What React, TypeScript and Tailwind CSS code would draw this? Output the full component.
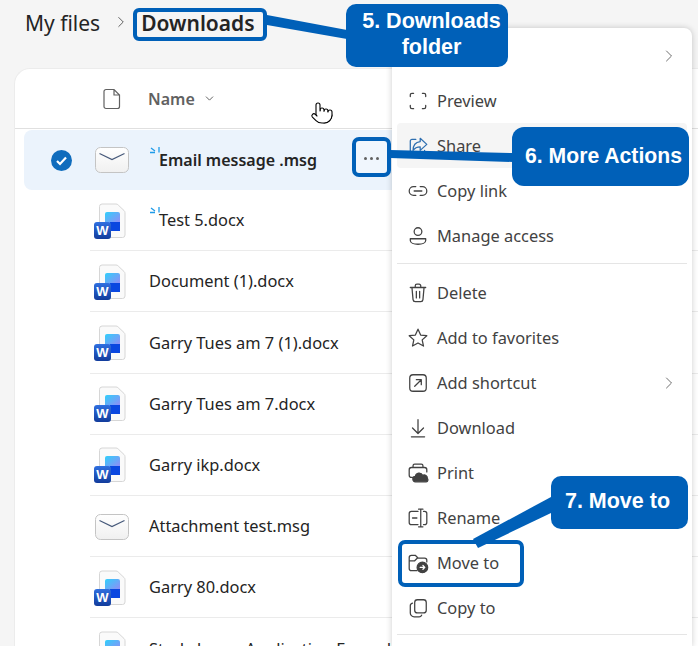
import React from 'react';
import { ChevronRight, ChevronDown, Pointer } from 'lucide-react';

const UI_FONT = "font-['Noto_Sans','Open_Sans',sans-serif]";

function Glyph({ children, color = '#424242' }: { children: React.ReactNode; color?: string }) {
  return (
    <svg width="22" height="22" viewBox="0 0 20 20" fill="none" stroke={color} strokeWidth="1.150" strokeLinecap="round" strokeLinejoin="round" className="ml-[-1px] shrink-0">
      {children}
    </svg>
  );
}

function WordIcon() {
  return (
    <svg width="34" height="36" viewBox="0 0 34 36" className="ml-[-1px] shrink-0">
      <defs>
        <linearGradient id="wd" x1="0" y1="0" x2="1" y2="1">
          <stop offset="0" stopColor="#2fd0fb" />
          <stop offset="1" stopColor="#9a86f5" />
        </linearGradient>
        <linearGradient id="wb" x1="0" y1="0" x2="0" y2="1">
          <stop offset="0" stopColor="#2f6fe0" />
          <stop offset="1" stopColor="#123c9c" />
        </linearGradient>
      </defs>
      <path d="M8 1h14c1 0 1.500.3 2.200 1l5.800 5.500c.7.7 1 1.300 1 2.200V32a2.500 2.500 0 0 1-2.500 2.500H8A2.500 2.500 0 0 1 5.500 32V3.500A2.500 2.500 0 0 1 8 1z" fill="#fafafa" stroke="#d6d6d6" />
      <rect x="11" y="9" width="15" height="12" rx="2" fill="url(#wd)" />
      <rect x="16" y="19" width="10" height="9" fill="#0a47e0" />
      <rect x="0" y="19" width="17" height="17" rx="3" fill="url(#wb)" />
      <text x="8.500" y="32" textAnchor="middle" fontSize="13" fontWeight="700" fill="#fff" fontFamily="Liberation Sans, sans-serif">W</text>
    </svg>
  );
}

function MailIcon() {
  return (
    <svg width="34" height="26" viewBox="0 0 34 26" className="shrink-0">
      <defs>
        <linearGradient id="ml" x1="0" y1="0" x2="0" y2="1">
          <stop offset="0" stopColor="#ffffff" />
          <stop offset="1" stopColor="#f0f0f0" />
        </linearGradient>
      </defs>
      <rect x="0.500" y="0.500" width="33" height="25" rx="5" fill="url(#ml)" stroke="#c4c4c4" />
      <path d="M4.500 6.500 17 12.500 29.500 6.500" fill="none" stroke="#46597a" strokeWidth="1.200" />
    </svg>
  );
}

function Sparkle() {
  return (
    <svg width="10" height="11" viewBox="0 0 10 11" className="absolute left-[-9px] top-[-1px]">
      <path d="M9 0v5.500M0 5.500h5M1 1l4 3" fill="none" stroke="#1f9be8" strokeWidth="1.300" />
    </svg>
  );
}

const files = [
  { name: 'Test 5.docx', kind: 'word', fresh: true },
  { name: 'Document (1).docx', kind: 'word' },
  { name: 'Garry Tues am 7 (1).docx', kind: 'word' },
  { name: 'Garry Tues am 7.docx', kind: 'word' },
  { name: 'Garry ikp.docx', kind: 'word' },
  { name: 'Attachment test.msg', kind: 'mail' },
  { name: 'Garry 80.docx', kind: 'word' },
  { name: 'Study Leave Application Form.docx', kind: 'word' },
];

const topItems = [
  { label: '', more: true, icon: null },
  { label: 'Preview', icon: <Glyph><path d="M3 6V4.500A1.500 1.500 0 0 1 4.500 3H6M14 3h1.500A1.500 1.500 0 0 1 17 4.500V6M17 14v1.500a1.500 1.500 0 0 1-1.500 1.500H14M6 17H4.500A1.500 1.500 0 0 1 3 15.500V14" /></Glyph> },
  { label: 'Share', active: true, icon: <Glyph color="#2f6fb0"><path d="M8 4H4.500A1.500 1.500 0 0 0 3 5.500v10A1.500 1.500 0 0 0 4.500 17h10a1.500 1.500 0 0 0 1.500-1.500V14" /><path d="M12 3l6 5.500-6 5.500v-3.300c-3 0-5 1-6.500 3.300 0-4.500 2.500-7.500 6.500-8z" /></Glyph> },
  { label: 'Copy link', icon: <Glyph><path d="M8 6H6a4 4 0 0 0 0 8h2M12 6h2a4 4 0 0 1 0 8h-2M6.500 10h7" /></Glyph> },
  { label: 'Manage access', icon: <Glyph><circle cx="10" cy="6" r="3.500" /><path d="M3 12.500h14V14c0 2-3 3.500-7 3.500S3 16 3 14z" /></Glyph> },
];

const bottomItems = [
  { label: 'Delete', icon: <Glyph><path d="M3 5h14M7.500 5V3.500A1.500 1.500 0 0 1 9 2h2a1.500 1.500 0 0 1 1.500 1.500V5M4.500 5l1 11a2 2 0 0 0 2 1.800h5a2 2 0 0 0 2-1.800l1-11M8.500 8.500v6M11.500 8.500v6" /></Glyph> },
  { label: 'Add to favorites', icon: <Glyph><path d="M10 2l2.400 5.300 5.600.6-4.200 3.800 1.200 5.600L10 14.500l-5 2.800 1.200-5.600L2 7.900l5.600-.6z" /></Glyph> },
  { label: 'Add shortcut', more: true, icon: <Glyph><rect x="2.500" y="2.500" width="15" height="15" rx="3" /><path d="M7 13l6-6M8.500 7H13v4.500" /></Glyph> },
  { label: 'Download', icon: <Glyph><path d="M10 2.500v12M5 10l5 5 5-5M4 18h12" /></Glyph> },
  { label: 'Print', icon: <Glyph><path d="M5.500 5V3.500A1.500 1.500 0 0 1 7 2h6a1.500 1.500 0 0 1 1.500 1.500V5M5 14H4a2 2 0 0 1-2-2V7a2 2 0 0 1 2-2h12a2 2 0 0 1 2 2v2" /><path d="M8 18a2.500 2.500 0 0 1-.400-5 3.500 3.500 0 0 1 6.600-1 3 3 0 0 1 4.300 3c.800.500.800 3-1 3z" fill="#424242" /></Glyph> },
  { label: 'Rename', icon: <Glyph><path d="M10 4H4a2 2 0 0 0-2 2v8a2 2 0 0 0 2 2h6M15 4h1a2 2 0 0 1 2 2v8a2 2 0 0 1-2 2h-1M12.500 2v16M10.500 2h4M10.500 18h4M5 10h4" /></Glyph> },
  { label: 'Move to', icon: <Glyph><path d="M9 17H4a2 2 0 0 1-2-2V5a2 2 0 0 1 2-2h3.500L10 5.500h6a2 2 0 0 1 2 2V9M2 8h5l2.500-2.500" /><circle cx="14" cy="14" r="4.800" fill="#424242" /><path d="M12 14h4M14.500 12.300 16.200 14l-1.700 1.700" stroke="#fff" /></Glyph> },
  { label: 'Copy to', icon: <Glyph><rect x="7" y="2.500" width="10.500" height="12" rx="2.500" /><path d="M5 5.500A2.500 2.500 0 0 0 3 8v6.500A3.500 3.500 0 0 0 6.500 18H11a2.500 2.500 0 0 0 2.300-1.500" /></Glyph> },
];

type Item = { label: string; icon: React.ReactNode; more?: boolean; active?: boolean };

function MenuItem({ item }: { item: Item }) {
  return (
    <div className={`flex h-[45px] items-center gap-[9px] rounded px-[11px] pt-[1px] text-[16.400px] text-[#424242] ${item.active ? 'bg-[#f5f5f5]' : ''}`}>
      <span className="flex w-[20px] shrink-0">{item.icon}</span>
      <span className="flex-1">{item.label}</span>
      {item.more && <ChevronRight size={20} strokeWidth={1.100} className="mr-[-3px] text-[#616161]" />}
    </div>
  );
}

function FileRow({ file }: { file: (typeof files)[number] }) {
  return (
    <div className="h-[61.200px] pl-[75px]">
      <div className="flex h-full items-center border-b border-[#ebebeb] pt-[1px]">
        <span className="flex w-[59px] justify-start pl-[5px]">{file.kind === 'word' ? <WordIcon /> : <MailIcon />}</span>
        <span className={`relative text-[16.400px] text-[#242424] ${file.fresh ? 'ml-[10px]' : ''}`}>
          {file.fresh && <Sparkle />}
          {file.name}
        </span>
      </div>
    </div>
  );
}

export default function App() {
  return (
    <div className={`relative h-[646px] w-[698px] overflow-hidden bg-[#f5f5f5] ${UI_FONT}`}>
      {/* Breadcrumb */}
      <div className="flex h-[68px] items-start pl-[25px] pt-[6px] text-[21px] leading-[34px] text-[#242424]">
        <span>My files</span>
        <ChevronRight size={18} strokeWidth={1.100} className="ml-[12px] mr-[11px] mt-[7px] text-[#424242]" />
        <span className="font-semibold">Downloads</span>
      </div>

      {/* File list */}
      <div className="ml-[14px] h-[700px] rounded-tl-[16px] border-l border-t border-[#ececec] bg-white">
        <div className="flex h-[60px] items-center border-b border-[#e0e0e0] pl-[88px] text-[16px] font-semibold text-[#616161]">
          <svg width="18" height="22" viewBox="0 0 18 22" fill="none" stroke="#616161" strokeWidth="1.200">
            <path d="M3 1.500h8l5.500 5.500v11.500a2 2 0 0 1-2 2H3a2 2 0 0 1-2-2V3.500a2 2 0 0 1 2-2zM11 1.500V7h5.500" />
          </svg>
          <span className="ml-[27px]">Name</span>
          <ChevronDown size={13} strokeWidth={1.800} className="ml-[8px]" />
        </div>

        <div className="mx-[9px] mt-[1px] flex h-[60px] items-center rounded-l-lg bg-[#ebf3fc]">
          <span className="ml-[27px] flex h-[21px] w-[21px] items-center justify-center rounded-full bg-[#0f6cbd]">
            <svg width="13" height="13" viewBox="0 0 13 13" fill="none" stroke="#fff" strokeWidth="2.200"><path d="M2 7l3 3 6-6.500" /></svg>
          </span>
          <span className="ml-[23px]"><MailIcon /></span>
          <span className="relative ml-[30px] text-[16px] font-semibold text-[#242424]">
            <Sparkle />
            Email message .msg
          </span>
        </div>

        {files.map((file) => (
          <FileRow key={file.name} file={file} />
        ))}
      </div>

      {/* Context menu */}
      <div className="absolute left-[392px] top-[28px] w-[300px] rounded-t-lg bg-white px-[5px] pt-[5px] shadow-[0_0_6px_rgba(0,0,0,0.2)]">
        {topItems.map((item) => (
          <MenuItem key={item.label} item={item} />
        ))}
        <div className="mt-[5px] h-[1px] bg-[#e5e5e5]" />
        <div className="mt-[6px]">
          {bottomItems.map((item) => (
            <MenuItem key={item.label} item={item} />
          ))}
        </div>
        <div className="mt-[4px] h-[1px] bg-[#e5e5e5]" />
        <div className="h-[12px]" />
      </div>

      {/* Hand cursor */}
      <Pointer size={24} strokeWidth={1.100} fill="#fff" className="absolute left-[310px] top-[101px] text-black" />

      {/* Row more actions */}
      <div className="absolute left-[352px] top-[137px] flex h-[40px] w-[39px] items-center justify-center rounded-[7px] border-4 border-[#0060b8] bg-[#f0f6fd] text-[#616161]">
        <span className="flex gap-[3px] pt-[2px]">
          <i className="h-[3px] w-[3px] rounded-full bg-[#616161]" />
          <i className="h-[3px] w-[3px] rounded-full bg-[#616161]" />
          <i className="h-[3px] w-[3px] rounded-full bg-[#616161]" />
        </span>
      </div>

      {/* Annotation outlines */}
      <div className="absolute left-[133px] top-[8px] h-[33px] w-[134px] rounded-[6px] border-4 border-[#0060b8]" />
      <div className="absolute left-[398px] top-[540px] h-[47px] w-[126px] rounded-[7px] border-4 border-[#0060b8]" />

      {/* Connectors */}
      <svg width="698" height="646" viewBox="0 0 698 646" className="pointer-events-none absolute left-0 top-0">
        <path d="M267 15l80 15v9l-80-14z" fill="#0060b8" />
        <path d="M390 150l123 3v9l-123-4z" fill="#0060b8" />
        <path d="M551 497v16l-73 35-5-9z" fill="#0060b8" />
      </svg>

      {/* Callouts */}
      <div className="absolute left-[346px] top-[4px] flex h-[63px] w-[162px] items-center justify-center rounded-[10px] bg-[#0060b8] pb-[3px] pl-[9px] text-center font-['Liberation_Sans',sans-serif] text-[21.500px] font-bold leading-[26px] text-white">
        5. Downloads<br />folder
      </div>
      <div className="absolute left-[512px] top-[127px] flex h-[59px] w-[177px] items-center justify-center rounded-[12px] bg-[#0060b8] pb-[1px] pl-[6px] font-['Liberation_Sans',sans-serif] text-[21.200px] font-bold text-white">
        6. More Actions
      </div>
      <div className="absolute left-[551px] top-[476px] flex h-[53px] w-[137px] items-center justify-center rounded-[10px] bg-[#0060b8] pb-[3px] pr-[4px] font-['Liberation_Sans',sans-serif] text-[21.500px] font-bold text-white">
        7. Move to
      </div>
    </div>
  );
}
